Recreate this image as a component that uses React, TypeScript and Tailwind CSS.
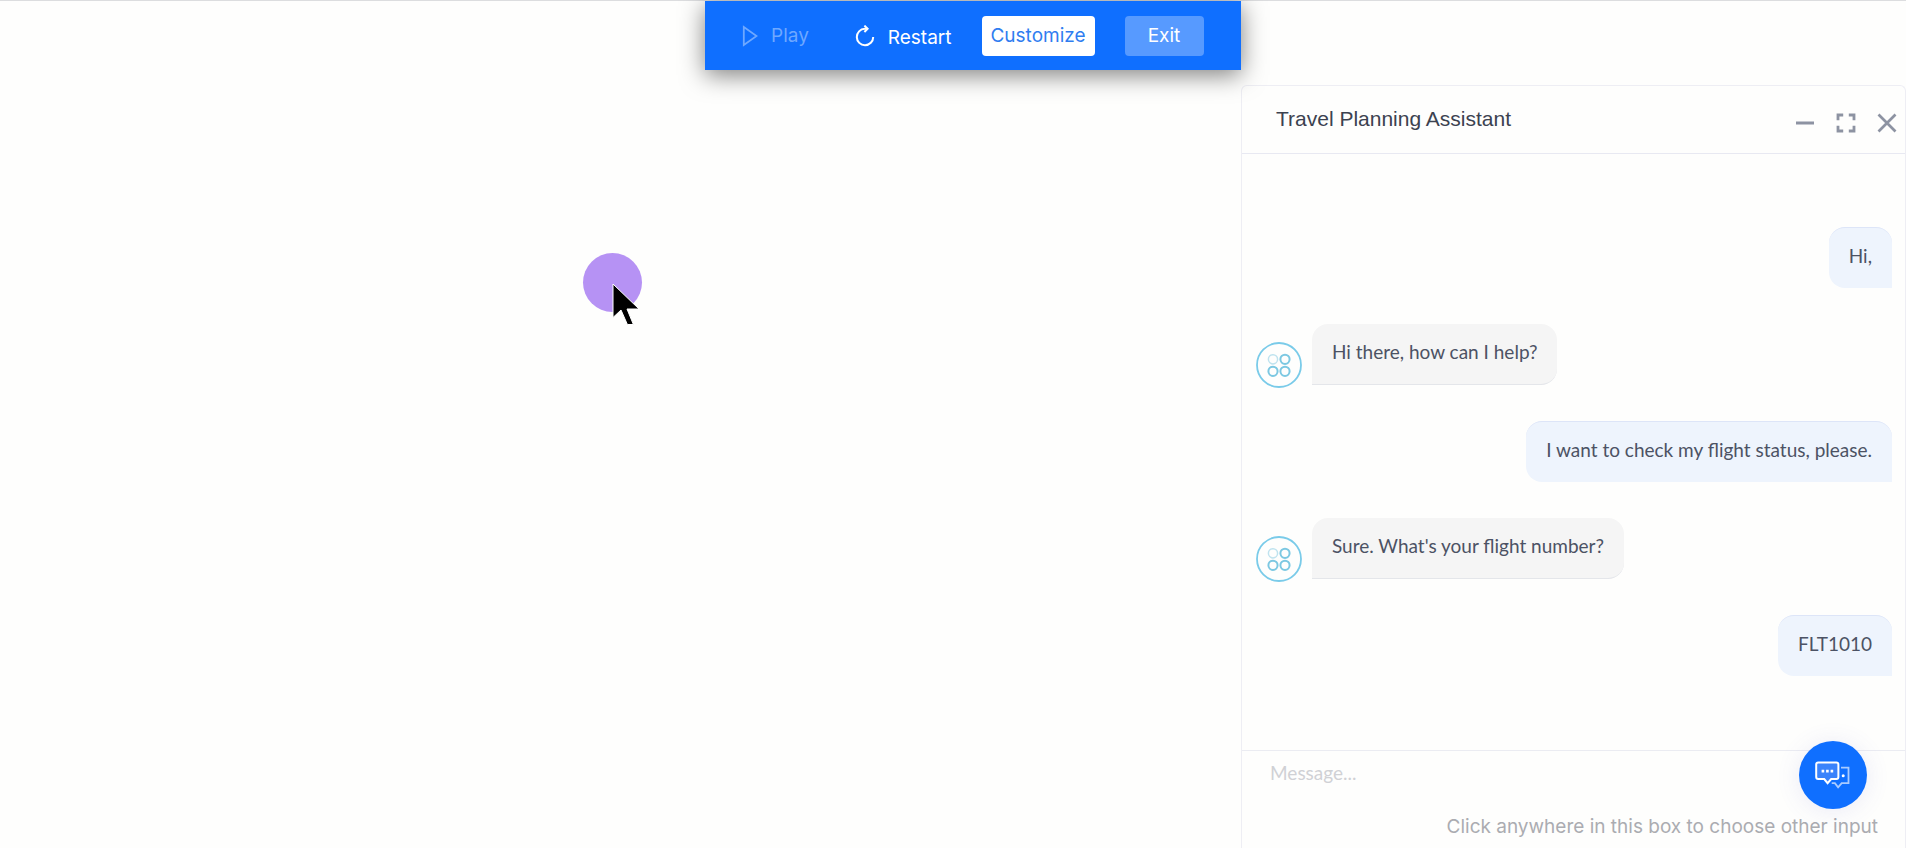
import { useState } from "react";

type Message = { id: number; from: "user" | "agent"; text: string };

const messages: Message[] = [
  { id: 1, from: "user", text: "Hi," },
  { id: 2, from: "agent", text: "Hi there, how can I help?" },
  { id: 3, from: "user", text: "I want to check my flight status, please." },
  { id: 4, from: "agent", text: "Sure. What's your flight number?" },
  { id: 5, from: "user", text: "FLT1010" },
];

function PlayIcon() {
  return (
    <svg width="16" height="22" viewBox="0 0 16 22" fill="none" stroke="currentColor" strokeWidth="1.8" aria-hidden="true">
      <path d="M1.8 2v18L14.6 11z" strokeLinejoin="miter" />
    </svg>
  );
}

function RestartIcon() {
  return (
    <svg width="20" height="26" viewBox="0 0 20 26" fill="none" stroke="currentColor" strokeWidth="2" aria-hidden="true">
      <path d="M12.400 3.800H9.800A8.200 8.200 0 1 0 18.200 12" />
      <path d="M9.400 .6 12.600 3.800 9.400 7" />
    </svg>
  );
}

function MinimizeIcon() {
  return (
    <svg width="20" height="20" viewBox="0 0 20 20" aria-hidden="true">
      <path d="M1 10h18" stroke="currentColor" strokeWidth="3" />
    </svg>
  );
}

function ExpandIcon() {
  return (
    <svg width="20" height="20" viewBox="0 0 20 20" fill="none" stroke="currentColor" strokeWidth="2.8" aria-hidden="true">
      <path d="M2 7.200V2H7.200M12.800 2H18V7.200M18 12.800V18H12.800M7.200 18H2V12.800" />
    </svg>
  );
}

function CloseIcon() {
  return (
    <svg width="20" height="20" viewBox="0 0 20 20" aria-hidden="true">
      <path d="M1.5 1.5l17 17M18.5 1.5l-17 17" stroke="currentColor" strokeWidth="2.7" />
    </svg>
  );
}

function Avatar() {
  return (
    <svg className="-mb-[3px] shrink-0" width="46" height="46" viewBox="0 0 46 46" fill="none" stroke="#7cc8e2" aria-hidden="true">
      <circle cx="23" cy="23" r="22" stroke="#7acbe9" strokeWidth="1.8" />
      <circle cx="17" cy="17.3" r="4.6" stroke="#bfe3ef" strokeWidth="1.5" />
      <circle cx="29" cy="17.3" r="4.6" strokeWidth="2" />
      <circle cx="17" cy="29.3" r="4.6" strokeWidth="2" />
      <circle cx="29" cy="29.3" r="4.6" strokeWidth="2" />
    </svg>
  );
}

function ChatIcon() {
  return (
    <svg width="36" height="28" viewBox="0 0 36 28" fill="none" aria-hidden="true">
      <path
        d="M26 6.700H33.500v15.400h-6.800l-3.600 4.300-3.200-4.300h-3.200"
        stroke="#a9cbff"
        strokeWidth="1.8"
      />
      <circle cx="28.200" cy="14.800" r="1.5" fill="#fff" />
      <path
        d="M3.200 1.400h18.200q2 0 2 2v12.600q0 2-2 2h-5.200L12.600 22.200l-3.400-4.200H3.200q-2 0-2-2V3.400q0-2 2-2z"
        fill="#3a83fb"
        stroke="#fff"
        strokeWidth="2"
      />
      <path d="M6.600 8.800h2.600v2.600H6.600zM11.100 8.800h2.600v2.600h-2.600zM15.600 8.800h2.600v2.600h-2.600z" fill="#fff" />
    </svg>
  );
}

function Pointer() {
  return (
    <div className="pointer-events-none absolute left-[583px] top-[252px] size-[59px] rounded-full bg-[#b692f4]">
      <svg className="absolute left-[29px] top-[29px]" width="30" height="46" viewBox="0 0 30 46" aria-hidden="true">
        <path d="M1 2v33.500l8-7.500 6.400 14.500h6L15 27h12z" fill="#000" stroke="#fff" strokeWidth="1" />
      </svg>
    </div>
  );
}

function Toolbar() {
  return (
    <nav
      aria-label="Preview controls"
      className="flex h-[69px] w-[536px] items-center bg-[#0f6fff] pl-[37px] font-['Inter',sans-serif] text-[19px] leading-6 text-white shadow-[0_5px_24px_rgba(0,0,0,0.5)]"
    >
      <button type="button" disabled className="flex items-center gap-[13px] text-[#6ea8ff]">
        <PlayIcon />
        Play
      </button>
      <button type="button" className="ml-[46px] flex items-center gap-[13px] pt-1">
        <RestartIcon />
        Restart
      </button>
      <button type="button" className="ml-[30px] h-10 w-[113px] rounded bg-white text-[#2f7df0]">
        Customize
      </button>
      <button type="button" className="ml-[30px] h-10 w-[79px] rounded bg-[#579aff]">
        Exit
      </button>
    </nav>
  );
}

function MessageRow({ message }: { message: Message }) {
  if (message.from === "user") {
    return (
      <li className="flex justify-end">
        <p className="rounded-2xl rounded-br-none border-t border-[#dde5f8] bg-[#eef4fd] px-5 pb-5 pt-4">{message.text}</p>
      </li>
    );
  }
  return (
    <li className="flex items-end gap-2.5">
      <Avatar />
      <p className="rounded-2xl rounded-bl-none border-b border-[#e4e6ea] bg-[#f5f5f5] px-5 pb-5 pt-4">{message.text}</p>
    </li>
  );
}

function ChatPanel() {
  const [draft, setDraft] = useState("");
  return (
    <section
      aria-label="Travel Planning Assistant"
      className="mt-[84px] flex w-[665px] shrink-0 flex-col rounded-t-md border-x border-t border-[#eeeef4] bg-[#fefefd] font-['Lato',sans-serif] text-[19px] leading-6 text-[#4c5264]"
    >
      <header className="flex h-[68px] items-center justify-between border-b border-[#e8e9f2] pl-[34px] pr-2">
        <h1 className="pb-0.5 font-['Liberation_Sans',sans-serif] text-[21px] text-[#3c4250]">Travel Planning Assistant</h1>
        <div className="flex items-center gap-[21px] pt-1.5 text-[#8d93a2]">
          <button type="button" aria-label="Minimize">
            <MinimizeIcon />
          </button>
          <button type="button" aria-label="Expand">
            <ExpandIcon />
          </button>
          <button type="button" aria-label="Close">
            <CloseIcon />
          </button>
        </div>
      </header>
      <ul className="flex flex-1 flex-col gap-9 pb-9 pl-3.5 pr-[13px] pt-[73px]">
        {messages.map((m) => (
          <MessageRow key={m.id} message={m} />
        ))}
      </ul>
      <footer className="relative flex flex-col gap-[30px] border-t border-[#ebecf2] pb-[9px] pl-7 pr-[27px] pt-2.5">
        <input
          aria-label="Message"
          placeholder="Message..."
          value={draft}
          onChange={(e) => setDraft(e.target.value)}
          className="w-full bg-transparent leading-6 outline-none placeholder:text-[#d0d1d5]"
        />
        <p className="text-right font-['Inter',sans-serif] text-[19px] text-[#abacb1]">
          Click anywhere in this box to choose other input
        </p>
        <button
          type="button"
          aria-label="Open chat"
          className="absolute -top-[10px] right-[38px] flex size-[68px] items-center justify-center rounded-full bg-[#0f6fff] shadow-[0_2px_24px_rgba(90,90,200,0.12)]"
        >
          <ChatIcon />
        </button>
      </footer>
    </section>
  );
}

export default function App() {
  return (
    <main className="relative flex min-h-screen border-t border-[#dcdddf] bg-[#fefefd]">
      <div className="relative z-10 flex flex-1 items-start justify-end">
        <Toolbar />
        <Pointer />
      </div>
      <ChatPanel />
    </main>
  );
}
